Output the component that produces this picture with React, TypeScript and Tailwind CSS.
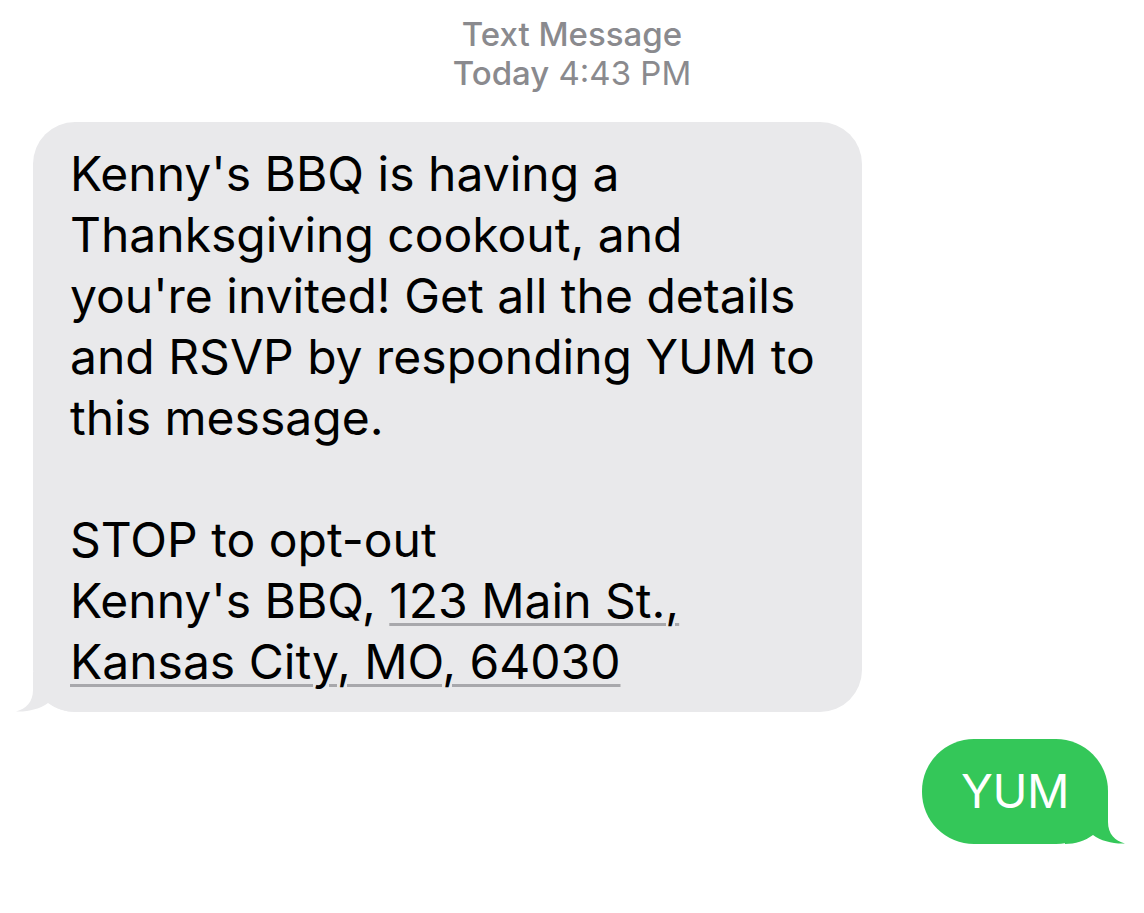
const lines = [
  "Kenny's BBQ is having a",
  'Thanksgiving cookout, and',
  "you're invited! Get all the details",
  'and RSVP by responding YUM to',
  'this message.',
]

function GrayTail() {
  return (
    <svg
      className="absolute bottom-0 left-[-17px]"
      width="60"
      height="40"
      viewBox="0 0 60 40"
    >
      <path
        d="M17 0 L17 18 C17 30 10 37 0 39.5 C12 40 24 37 32 31 C40 37 50 40 60 40 L60 0 Z"
        fill="#e9e9eb"
      />
    </svg>
  )
}

function GreenTail() {
  return (
    <svg
      className="absolute bottom-0 right-[-17px]"
      width="60"
      height="52"
      viewBox="0 0 60 52"
    >
      <path
        d="M43 0 L43 30 C43 42 50 49 60 51.5 C48 52 36 49 28 43 C20 49 10 52 0 52 L0 0 Z"
        fill="#34c759"
      />
    </svg>
  )
}

const link = 'underline decoration-[#a8a8ac] decoration-[3px] underline-offset-[5px]'

export default function App() {
  return (
    <div
      className="w-[1144px] h-[913px] bg-white overflow-hidden"
      style={{ fontFamily: 'Inter, "Noto Sans", sans-serif' }}
    >
      <div className="pt-[15px] flex flex-col items-center text-[#8a8a8e] text-[33px] leading-[39px]">
        <div className="font-medium">Text Message</div>
        <div>
          <span className="font-medium">Today</span> 4:43 PM
        </div>
      </div>

      <div className="pl-[33px] mt-[29px]">
        <div className="relative w-[829px] rounded-[42px] bg-[#e9e9eb] pl-[37px] pr-[20px] pt-[21px] pb-[20px] text-black text-[48px] leading-[61px]">
          <GrayTail />
          <div className="relative">
            {lines.map((l) => (
              <div key={l}>{l}</div>
            ))}
            <div>&nbsp;</div>
            <div>STOP to opt-out</div>
            <div>
              Kenny's BBQ, <span className={link}>123 Main St.,</span>
            </div>
            <div>
              <span className={link}>Kansas City, MO, 64030</span>
            </div>
          </div>
        </div>
      </div>

      <div className="flex justify-end pr-[36px] mt-[27px]">
        <div className="relative rounded-[52px] bg-[#34c759] w-[186px] h-[105px] flex items-center justify-center text-white text-[47px] tracking-[-0.5px]">
          <GreenTail />
          <span className="relative">YUM</span>
        </div>
      </div>
    </div>
  )
}
